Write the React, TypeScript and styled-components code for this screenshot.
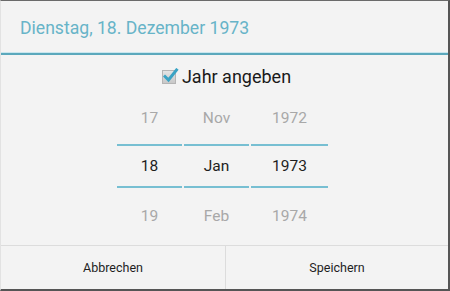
import React from "react";
import styled, { createGlobalStyle } from "styled-components";

const Global = createGlobalStyle`
  html, body { margin: 0; padding: 0; background: #f3f3f3; }
  body { font-family: Roboto, "Noto Sans", sans-serif; }
  * { box-sizing: border-box; }
`;

const Frame = styled.div`
  width: 450px;
  height: 291px;
  background: #f3f3f3;
  border-top: 1px solid #6a6a6a;
  border-right: 2px solid #555;
  border-bottom: 2px solid #555;
  border-left: 1px solid #e2e2e2;
  display: flex;
  flex-direction: column;
`;

const Header = styled.div`
  height: 54px;
  flex: 0 0 54px;
  display: flex;
  align-items: center;
  padding-left: 19px;
  padding-top: 2px;
  border-bottom: 2px solid #5ba8bc;
  box-shadow: inset 0 -1px 0 #c9e6ee;
`;

const Title = styled.div`
  font-size: 17.6px;
  color: #67b4c8;
`;

const CheckRow = styled.div`
  height: 40px;
  flex: 0 0 40px;
  display: flex;
  align-items: center;
  justify-content: center;
  gap: 6px;
  padding-top: 3px;
  padding-left: 4px;
`;

const Box = styled.span`
  position: relative;
  width: 14px;
  height: 14px;
  background: linear-gradient(#e4e4e4, #c8c8c8);
  border: 1px solid #b5b5b5;
  display: inline-block;
`;

const CheckLabel = styled.span`
  font-size: 18px;
  color: #1a1a1a;
`;

const Picker = styled.div`
  display: flex;
  justify-content: center;
  gap: 2px;
  padding-right: 4px;
  flex: 1;
`;

const Column = styled.div<{ $w: number }>`
  width: ${(p) => p.$w}px;
  display: flex;
  flex-direction: column;
`;

const Cell = styled.div<{ $h: number; $pb?: number }>`
  height: ${(p) => p.$h}px;
  padding-bottom: ${(p) => p.$pb ?? 0}px;
  display: flex;
  align-items: center;
  justify-content: center;
  font-size: 15.5px;
  color: #a8a8a8;
`;

const Selected = styled.div`
  height: 44px;
  border-top: 2px solid #77bfd2;
  border-bottom: 2px solid #77bfd2;
  display: flex;
  align-items: center;
  justify-content: center;
  font-size: 15.5px;
  color: #1e1e1e;
`;

const Buttons = styled.div`
  flex: 0 0 44px;
  display: flex;
  border-top: 1px solid #dcdcdc;
`;

const Button = styled.div<{ $divider?: boolean }>`
  flex: ${(p) => (p.$divider ? "0 0 225px" : "1")};
  display: flex;
  align-items: center;
  justify-content: center;
  font-size: 12.5px;
  color: #1e1e1e;
  border-right: ${(p) => (p.$divider ? "1px solid #dcdcdc" : "none")};
`;

const cols = [
  { w: 65, v: ["17", "18", "19"] },
  { w: 65, v: ["Nov", "Jan", "Feb"] },
  { w: 77, v: ["1972", "1973", "1974"] },
];

export default function App() {
  return (
    <>
      <Global />
      <Frame>
        <Header>
          <Title>Dienstag, 18. Dezember 1973</Title>
        </Header>
        <CheckRow>
          <Box>
            <svg
              width="16"
              height="15"
              viewBox="0 0 16 15"
              style={{ position: "absolute", left: 0, top: -3 }}
            >
              <path
                d="M2 8.5 L5.5 12 L13.5 2"
                fill="none"
                stroke="#3aa3c4"
                strokeWidth="3"
                strokeLinecap="square"
              />
            </svg>
          </Box>
          <CheckLabel>Jahr angeben</CheckLabel>
        </CheckRow>
        <Picker>
          {cols.map((c, i) => (
            <Column key={i} $w={c.w}>
              <Cell $h={49} $pb={4}>{c.v[0]}</Cell>
              <Selected>{c.v[1]}</Selected>
              <Cell $h={55}>{c.v[2]}</Cell>
            </Column>
          ))}
        </Picker>
        <Buttons>
          <Button $divider>Abbrechen</Button>
          <Button>Speichern</Button>
        </Buttons>
      </Frame>
    </>
  );
}
